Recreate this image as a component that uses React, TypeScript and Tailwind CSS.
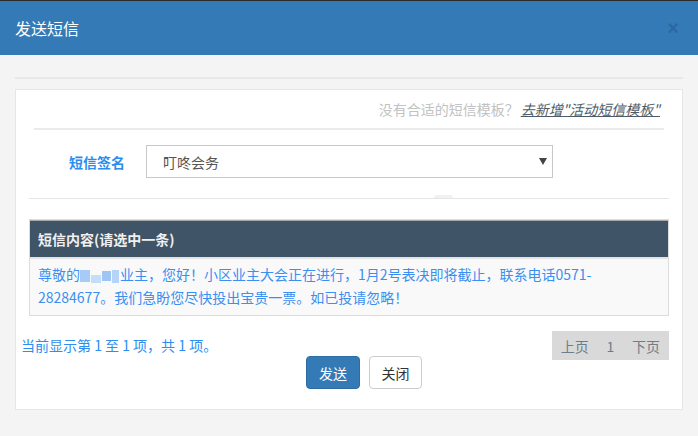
import { useState } from 'react';

const FONT = '"Noto Sans CJK SC", "Liberation Sans", sans-serif';

function Mosaic() {
  // 打码的小区名称
  return (
    <span aria-hidden="true" className="inline-flex h-[14px] w-[40px] items-center gap-[1px] align-[-2px]">
      <span className="h-[12px] w-[10px] bg-[#a6cbf6]" />
      <span className="h-[8px] w-[10px] self-end bg-[#c4ddfa]" />
      <span className="h-[10px] w-[9px] bg-[#9fc5f4]" />
      <span className="h-[13px] w-[7px] bg-[#b6d4f8]" />
    </span>
  );
}

export default function App() {
  const [selected, setSelected] = useState(0);
  const [signature, setSignature] = useState('叮咚会务');

  return (
    <div className="h-[436px] w-[698px] overflow-hidden bg-[#f4f4f4]" style={{ fontFamily: FONT }}>
      <div className="flex h-[55px] items-center justify-between border-t border-[#2b2b2b] bg-[#337ab7] pl-[15px] pr-[19px]">
        <h4 className="text-[16px] leading-[22px] text-white">发送短信</h4>
        <button
          type="button"
          className="text-[20px] font-bold leading-none text-[#2c68a0]"
          style={{ fontFamily: '"Liberation Sans", sans-serif' }}
        >
          ×
        </button>
      </div>

      <div className="px-[15px] pt-[22px]">
        <div className="h-[2px] bg-[#e6e9ec]" />

        <div className="mt-[10px] h-[321px] border border-[#e6e6e6] bg-white">
          <div className="flex justify-end pr-[22px] pt-[10px] text-[14px] leading-[18px]">
            <span className="text-[#c2c2c2]">没有合适的短信模板？</span>
            <a className="ml-[2px] italic text-[#4d5b69] underline">去新增"活动短信模板"</a>
          </div>
          <div className="mx-[18px] mt-[10px] h-[2px] bg-[#e8ecef]" />

          <div className="mt-[15px] flex items-center">
            <label className="w-[109px] text-right text-[14px] font-bold leading-[20px] text-[#2b8def]">短信签名</label>
            <div className="relative ml-[21px] h-[33px] w-[407px]">
              <select
                value={signature}
                onChange={(e) => setSignature(e.target.value)}
                className="h-full w-full appearance-none border border-[#c8c8c8] bg-white pl-[16px] text-[14px] leading-[20px] text-[#555] outline-none"
              >
                <option>叮咚会务</option>
              </select>
              <span className="pointer-events-none absolute right-[6px] top-[13px] h-0 w-0 border-x-[4px] border-t-[7px] border-x-transparent border-t-[#444]" />
            </div>
          </div>

          <div className="relative mx-[13px] mt-[20px] h-px bg-[#e6e6e6]">
            <span className="absolute left-[405px] top-[-3px] h-[3px] w-[19px] rounded-t-[3px] bg-[#f1f1f1]" />
          </div>

          <div className="mx-[13px] mt-[20px] border border-[#dcdcdc]">
            <div className="flex h-[37px] items-center border-t border-[#a8a8a8] bg-[#3f5467] px-[8px] text-[14px] font-bold leading-[20px] text-[#f0f0f0]">
              短信内容(请选中一条)
            </div>
            <div
              onClick={() => setSelected(0)}
              className={`cursor-pointer border-t-2 border-[#e4e4e4] px-[8px] pb-[6px] pt-[4px] text-[14px] leading-[23px] text-[#3b8ff0] ${
                selected === 0 ? 'bg-[#f9f9f9]' : 'bg-white'
              }`}
            >
              尊敬的<Mosaic />业主，您好！小区业主大会正在进行，1月2号表决即将截止，联系电话0571-28284677。我们急盼您尽快投出宝贵一票。如已投请忽略！
            </div>
          </div>

          <div className="mx-[13px] mt-[15px] flex items-start justify-between">
            <div className="ml-[-8px] pt-[5px] text-[14px] leading-[18px] text-[#2d8ef0]">当前显示第 1 至 1 项，共 1 项。</div>
            <div className="flex h-[29px] w-[117px] items-center justify-around bg-[#d9d9d9] text-[14px] leading-[20px] text-[#6f7d8a]">
              <span>上页</span>
              <span>1</span>
              <span>下页</span>
            </div>
          </div>

          <div className="mt-[-4px] flex justify-center gap-[9px] pl-[30px]">
            <button
              type="button"
              className="h-[33px] w-[54px] rounded-[4px] border border-[#2e6da4] bg-[#337ab7] text-[14px] leading-[20px] text-white"
            >
              发送
            </button>
            <button
              type="button"
              className="h-[33px] w-[53px] rounded-[4px] border border-[#cccccc] bg-white text-[14px] leading-[20px] text-[#333]"
            >
              关闭
            </button>
          </div>
        </div>
      </div>
    </div>
  );
}
